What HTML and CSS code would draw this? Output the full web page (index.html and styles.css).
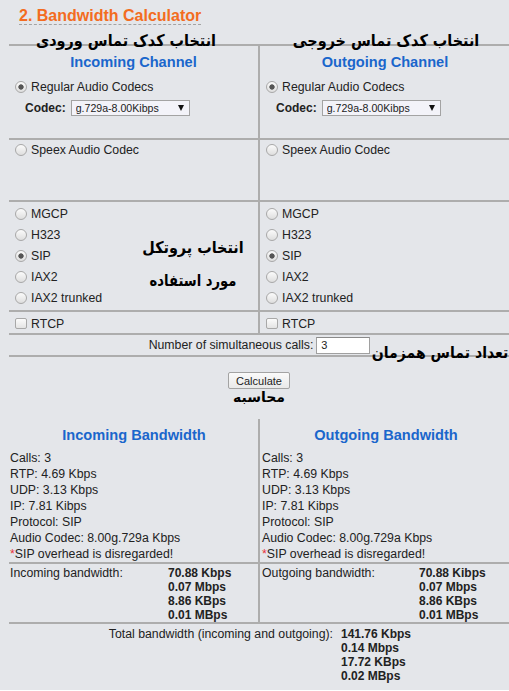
FILE: index.html
```html
<!DOCTYPE html>
<html lang="en">
<head>
<meta charset="utf-8">
<title>Bandwidth Calculator</title>
<link rel="stylesheet" href="styles.css">
</head>
<body>
<div class="page">
  <h2 class="title"><span>2. Bandwidth Calculator</span></h2>

  <div class="calc">
    <div class="cell left r1">
      <h3 class="heading">Incoming Channel</h3>
      <label class="opt"><input type="radio" name="inc" checked>Regular Audio Codecs</label>
      <div class="codec"><b>Codec:</b><span class="select-wrap"><select class="select"><option>g.729a-8.00Kibps</option></select></span></div>
    </div>
    <div class="cell r1">
      <h3 class="heading">Outgoing Channel</h3>
      <label class="opt"><input type="radio" name="out" checked>Regular Audio Codecs</label>
      <div class="codec"><b>Codec:</b><span class="select-wrap"><select class="select"><option>g.729a-8.00Kibps</option></select></span></div>
    </div>

    <div class="cell left r2">
      <label class="opt"><input type="radio" name="inc">Speex Audio Codec</label>
    </div>
    <div class="cell r2">
      <label class="opt"><input type="radio" name="out">Speex Audio Codec</label>
    </div>

    <div class="cell left r3">
      <label class="opt p"><input type="radio" name="pin">MGCP</label>
      <label class="opt p"><input type="radio" name="pin">H323</label>
      <label class="opt p"><input type="radio" name="pin" checked>SIP</label>
      <label class="opt p"><input type="radio" name="pin">IAX2</label>
      <label class="opt p"><input type="radio" name="pin">IAX2 trunked</label>
    </div>
    <div class="cell r3">
      <label class="opt p"><input type="radio" name="pout">MGCP</label>
      <label class="opt p"><input type="radio" name="pout">H323</label>
      <label class="opt p"><input type="radio" name="pout" checked>SIP</label>
      <label class="opt p"><input type="radio" name="pout">IAX2</label>
      <label class="opt p"><input type="radio" name="pout">IAX2 trunked</label>
    </div>

    <div class="cell left r4">
      <label class="opt c"><input type="checkbox">RTCP</label>
    </div>
    <div class="cell r4">
      <label class="opt c"><input type="checkbox">RTCP</label>
    </div>

    <div class="cell calls">
      <span>Number of simultaneous calls:</span><input class="num" type="text" value="3">
    </div>
  </div>

  <div class="btn-row"><button class="btn" type="button">Calculate</button></div>

  <div class="results">
    <div class="res-col left">
      <div class="res-info">
        <h3 class="heading">Incoming Bandwidth</h3>
        <p>Calls: 3</p>
        <p>RTP: 4.69 Kbps</p>
        <p>UDP: 3.13 Kbps</p>
        <p>IP: 7.81 Kibps</p>
        <p>Protocol: SIP</p>
        <p>Audio Codec: 8.00g.729a Kbps</p>
        <p><span class="star">*</span>SIP overhead is disregarded!</p>
      </div>
      <div class="res-bw">
        <span class="bw-label">Incoming bandwidth:</span>
        <div class="bw-vals"><b>70.88 Kbps</b><b>0.07 Mbps</b><b>8.86 KBps</b><b>0.01 MBps</b></div>
      </div>
    </div>
    <div class="res-col">
      <div class="res-info">
        <h3 class="heading">Outgoing Bandwidth</h3>
        <p>Calls: 3</p>
        <p>RTP: 4.69 Kbps</p>
        <p>UDP: 3.13 Kbps</p>
        <p>IP: 7.81 Kibps</p>
        <p>Protocol: SIP</p>
        <p>Audio Codec: 8.00g.729a Kbps</p>
        <p><span class="star">*</span>SIP overhead is disregarded!</p>
      </div>
      <div class="res-bw">
        <span class="bw-label">Outgoing bandwidth:</span>
        <div class="bw-vals"><b>70.88 Kibps</b><b>0.07 Mbps</b><b>8.86 KBps</b><b>0.01 MBps</b></div>
      </div>
    </div>
  </div>

  <div class="total">
    <span class="total-label">Total bandwidth (incoming and outgoing):</span>
    <div class="bw-vals"><b>141.76 Kbps</b><b>0.14 Mbps</b><b>17.72 KBps</b><b>0.02 MBps</b></div>
  </div>

  <div class="note n1" dir="rtl">انتخاب کدک تماس ورودی</div>
  <div class="note n2" dir="rtl">انتخاب کدک تماس خروجی</div>
  <div class="note n3" dir="rtl">انتخاب پروتکل</div>
  <div class="note n4" dir="rtl">مورد استفاده</div>
  <div class="note n5" dir="rtl">تعداد تماس همزمان</div>
  <div class="note n6" dir="rtl">محاسبه</div>
</div>
</body>
</html>
```

FILE: styles.css
```css
html, body {
  margin: 0;
  padding: 0;
  background: #ffffff;
}

.page {
  position: relative;
  background: #e4e6ea;
  color: #222222;
  font-family: "Liberation Sans", Arial, sans-serif;
  font-size: 12.3px;
  padding-bottom: 7px;
  overflow: hidden;
}

.title {
  margin: 7px 0 0 19px;
  font-size: 16px;
  line-height: 18px;
  font-weight: bold;
  color: #f36c21;
}

.title span {
  border-bottom: 1px dashed #a3a3a3;
}

.calc {
  margin: 19px 0 0 9px;
  width: 501px;
  border-top: 2px solid #adadad;
  display: grid;
  grid-template-columns: 251px 250px;
  grid-template-rows: 94px 62px 110px 23px 22px;
}

.cell {
  box-sizing: border-box;
  border-bottom: 2px solid #adadad;
}

.left {
  border-right: 2px solid #adadad;
}

.heading {
  margin: 0;
  font-size: 14.6px;
  line-height: 18px;
  font-weight: bold;
  text-align: center;
  color: #1a66cc;
}

.r1 {
  padding-top: 7px;
}

.r1 .opt {
  margin-top: 5px;
}

.r3 {
  padding-top: 1px;
}

.r4 {
  padding-top: 2px;
}

.opt {
  display: flex;
  align-items: center;
  height: 21px;
  padding-left: 6px;
}

.r2 .opt {
  height: 20px;
}

.c {
  height: 19px;
}

input[type="radio"] {
  appearance: none;
  -webkit-appearance: none;
  box-sizing: border-box;
  width: 12px;
  height: 12px;
  margin: 0 4px 0 0;
  border: 1px solid #a8a8a8;
  border-radius: 50%;
  background: linear-gradient(#fbfbfb, #dedede);
}

input[type="radio"]:checked {
  background: radial-gradient(circle, #555555 0 2.3px, rgba(85, 85, 85, 0) 3px), linear-gradient(#fbfbfb, #dedede);
}

input[type="checkbox"] {
  appearance: none;
  -webkit-appearance: none;
  box-sizing: border-box;
  width: 12px;
  height: 11px;
  margin: 0 4px 0 0;
  border: 1px solid #a8a8a8;
  border-radius: 2px;
  background: linear-gradient(#fbfbfb, #e4e4e4);
}

.codec {
  display: flex;
  align-items: center;
  gap: 5px;
  margin-top: 3px;
  padding-left: 16px;
}

.codec b {
  font-size: 12px;
}

.select-wrap {
  position: relative;
  display: block;
  height: 16px;
}

.select {
  appearance: none;
  -webkit-appearance: none;
  box-sizing: border-box;
  display: block;
  width: 119px;
  height: 16px;
  margin: 0;
  padding: 0 0 0 4px;
  border: 1px solid #a3a3a3;
  border-radius: 0;
  background: #f3f3f9;
  color: #222222;
  font-family: "Liberation Sans", Arial, sans-serif;
  font-size: 10.6px;
  line-height: 14px;
}

.select-wrap::after {
  content: "";
  position: absolute;
  right: 6px;
  top: 5px;
  width: 0;
  height: 0;
  border-left: 3.5px solid transparent;
  border-right: 3.5px solid transparent;
  border-top: 6px solid #111111;
  pointer-events: none;
}

.calls {
  grid-column: 1 / -1;
  display: flex;
  justify-content: center;
  align-items: center;
  gap: 3px;
}

.num {
  box-sizing: border-box;
  width: 54px;
  height: 17px;
  margin: 0;
  padding: 0 0 0 4px;
  border: 1px solid #a0a0a0;
  border-top-color: #8a8a8a;
  background: #ffffff;
  font-family: "Liberation Sans", Arial, sans-serif;
  font-size: 11px;
  color: #222222;
}

.btn-row {
  display: flex;
  justify-content: center;
  margin-top: 15px;
  padding-left: 9px;
}

.btn {
  box-sizing: border-box;
  width: 62px;
  height: 17px;
  margin: 0;
  padding: 0;
  border: 1px solid #a3a3a3;
  border-radius: 2px;
  background: linear-gradient(#fafafa, #e9e9e9);
  font-family: "Liberation Sans", Arial, sans-serif;
  font-size: 11px;
  color: #222222;
}

.results {
  margin: 30px 0 0 9px;
  width: 501px;
  display: grid;
  grid-template-columns: 251px 250px;
}

.res-col {
  box-sizing: border-box;
  padding-left: 2px;
}

.res-col.left {
  padding-left: 1px;
}

.res-info {
  padding-top: 7px;
  border-bottom: 2px solid #adadad;
  margin-left: -2px;
  padding-left: 2px;
}

.res-col.left .res-info {
  margin-left: -1px;
  padding-left: 1px;
}

.res-info .heading {
  margin-bottom: 6px;
}

.res-info p {
  margin: 0;
  line-height: 16px;
}

.star {
  color: #e8313a;
}

.res-bw {
  display: grid;
  grid-template-columns: 157px auto;
  padding-top: 2px;
  line-height: 14px;
}

.res-col.left .res-bw {
  grid-template-columns: 158px auto;
}

.bw-vals {
  display: flex;
  flex-direction: column;
}

.bw-vals b {
  font-size: 12px;
  line-height: 14px;
}

.total {
  margin-left: 9px;
  width: 501px;
  border-top: 2px solid #adadad;
  padding-top: 3px;
  display: grid;
  grid-template-columns: 324px auto;
  column-gap: 8px;
  line-height: 14px;
}

.total-label {
  text-align: right;
}

.note {
  position: absolute;
  white-space: nowrap;
  font-family: "DejaVu Sans", sans-serif;
  font-weight: bold;
  font-size: 16px;
  line-height: 20px;
  color: #000000;
  transform: translateX(-50%) scaleX(0.9);
}

.n1 { left: 126px; top: 31px; }
.n2 { left: 386px; top: 31px; }
.n3 { left: 193px; top: 238px; }
.n4 { left: 193px; top: 271px; transform: translateX(-50%) scaleX(0.82); }
.n5 { left: 440px; top: 343px; transform: translateX(-50%) scaleX(0.88); }
.n6 { left: 259px; top: 387px; font-size: 14px; transform: translateX(-50%); }
```
